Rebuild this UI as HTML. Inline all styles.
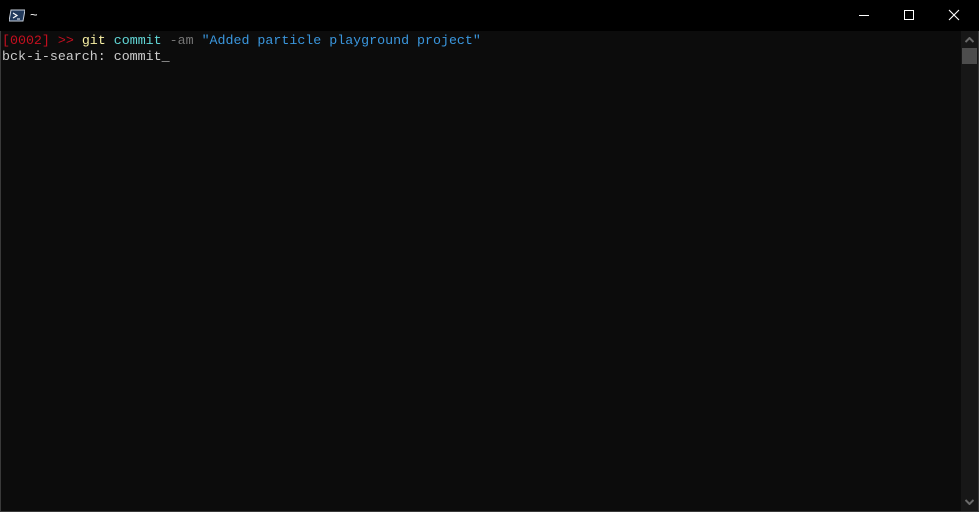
<!DOCTYPE html>
<html><head><style>
body{margin:0;width:979px;height:512px;overflow:hidden;background:#0c0c0c;position:relative;font-family:"Liberation Mono",monospace}
#tb{position:absolute;left:0;top:0;width:979px;height:31px;background:#000}
#bd{position:absolute;left:0;top:31px;width:979px;height:481px;border-left:1px solid #3a3a3a;border-right:1px solid #3a3a3a;border-bottom:1px solid #3a3a3a;box-sizing:border-box}
#sb{position:absolute;left:961px;top:31px;width:17px;height:480px;background:#171717}
#th{position:absolute;left:962px;top:48px;width:15px;height:16px;background:#4d4d4d}
.t{position:absolute;left:2px;font-size:13.3px;line-height:16px;white-space:pre;color:#cccccc}
</style></head><body>
<div id="tb">
<svg style="position:absolute;left:9px;top:9px" width="16" height="13" viewBox="0 0 16 13"><path d="M2 1H16L14 12H0Z" fill="#223a5c" stroke="#c8d0dc" stroke-width="1"/><path d="M4 4L8 6.5L4 9" stroke="#fff" stroke-width="1.2" fill="none"/><path d="M8 10H11" stroke="#fff"/></svg>
<div style="position:absolute;left:30px;top:7px;color:#fff;font:13px 'Liberation Sans',sans-serif">~</div>
<div style="position:absolute;left:859px;top:15px;width:10px;height:1px;background:#fff"></div>
<div style="position:absolute;left:904px;top:10px;width:8px;height:8px;border:1px solid #fff"></div>
<svg style="position:absolute;left:948px;top:9px" width="12" height="12"><path d="M1 1L11 11M11 1L1 11" stroke="#fff" stroke-width="1.1"/></svg>
</div>
<div id="bd"></div>
<div id="sb"><svg style="position:absolute;left:4px;top:6px" width="9" height="6"><path d="M0.5 5L4.5 1L8.5 5" stroke="#6a6a6a" stroke-width="2" fill="none"/></svg><svg style="position:absolute;left:4px;top:468px" width="9" height="6"><path d="M0.5 1L4.5 5L8.5 1" stroke="#6a6a6a" stroke-width="2" fill="none"/></svg></div>
<div id="th"></div>
<div class="t" style="top:33px"><span style="color:#c50f1f">[0002]</span> <span style="color:#c50f1f">&gt;&gt;</span> <span style="color:#f9f1a5">git</span> <span style="color:#61d6d6">commit</span> <span style="color:#767676">-am</span> <span style="color:#3a96dd">"Added particle playground project"</span></div>
<div class="t" style="top:49px">bck-i-search: commit_</div>
</body></html>
